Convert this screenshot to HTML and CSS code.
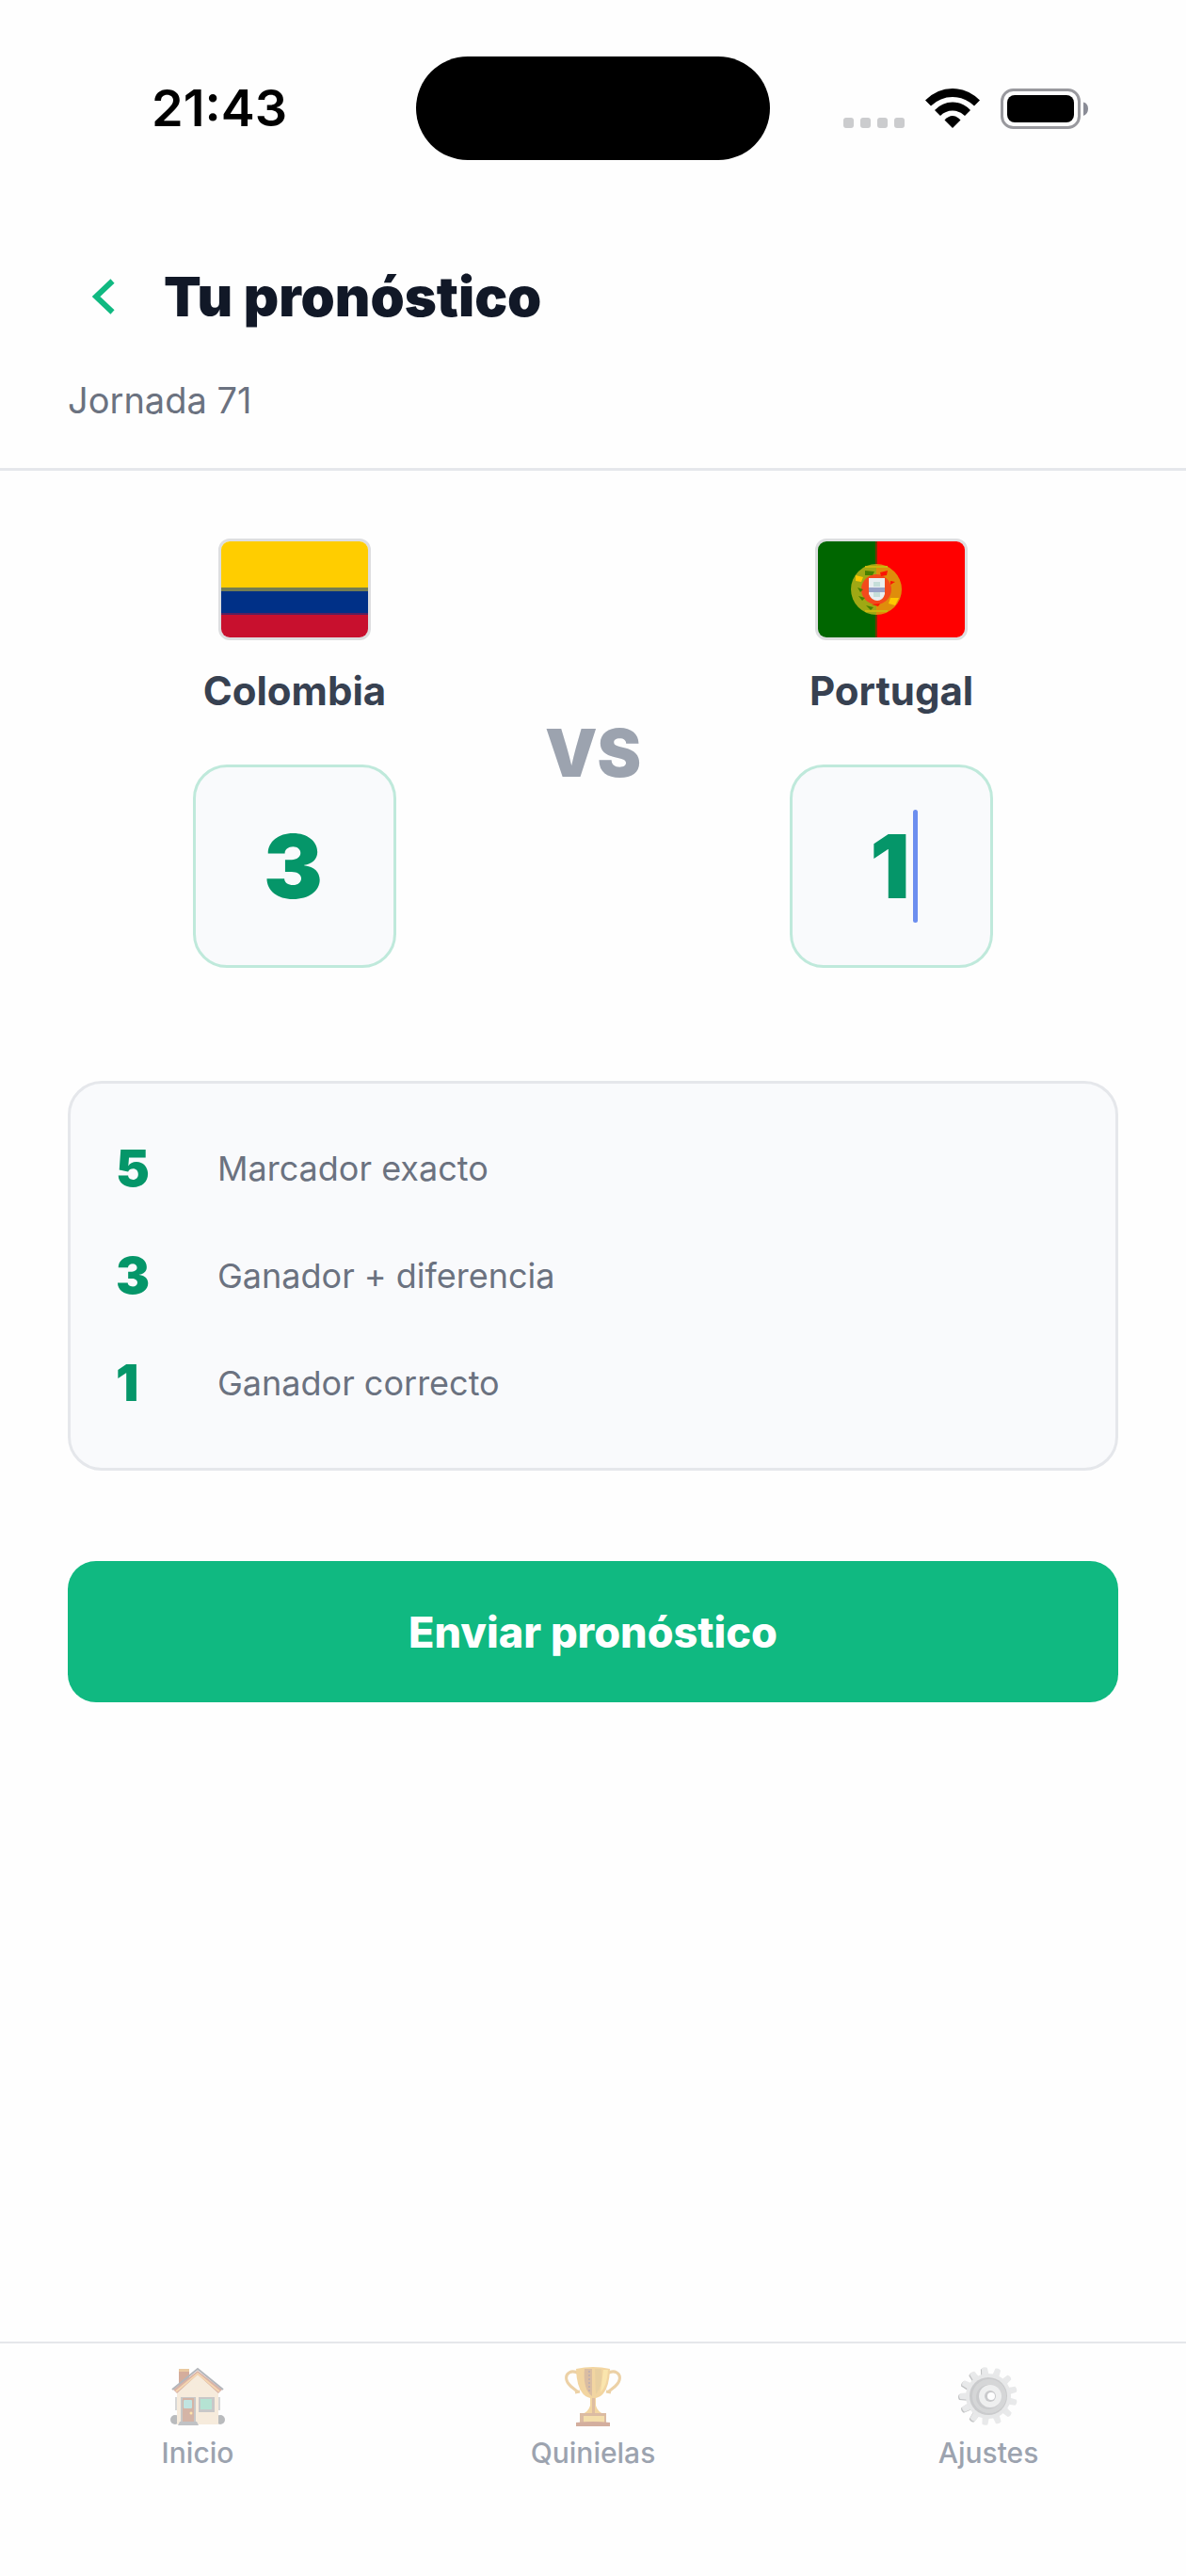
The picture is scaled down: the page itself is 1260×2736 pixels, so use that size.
FILE: index.html
```html
<!DOCTYPE html>
<html lang="es">
<head>
<meta charset="utf-8">
<meta name="viewport" content="width=device-width, initial-scale=1">
<title>Tu pronóstico</title>
<link rel="stylesheet" href="styles.css">
</head>
<body>
<div class="screen">
  <div class="status">
    <time class="status-time">21:43</time>
    <div class="island"></div>
    <div class="status-icons">
      <svg class="signal" viewBox="0 0 65 43" aria-hidden="true">
        <g fill="#cbccce"><rect y="31" width="11" height="11" rx="3"/><rect x="18" y="31" width="11" height="11" rx="3"/><rect x="36" y="31" width="11" height="11" rx="3"/><rect x="54" y="31" width="11" height="11" rx="3"/></g>
      </svg>
      <svg class="wifi" viewBox="0 0 58 43" aria-hidden="true">
        <path d="M0 12.500Q12.500 0 29 0T58 12.500L52 18.500Q42 9 29 9T6 18.500Z"/>
        <path d="M10 23Q18 14.500 29 14.500T48 23L42 29Q36.500 23.500 29 23.500T16 29Z"/>
        <path d="M20.500 33.500Q24.500 29 29 29T37.500 33.500L29 42Z"/>
      </svg>
      <svg class="battery" viewBox="0 0 94 43" aria-hidden="true">
        <rect x="1.500" y="1.500" width="82" height="40" rx="12" fill="none" stroke="#99999e" stroke-width="3"/>
        <rect x="7" y="7" width="71" height="29" rx="8"/>
        <path d="M88 14.500Q93 16 93 21.500T88 29Z" fill="#8a8c96"/>
      </svg>
    </div>
  </div>

  <header class="header">
    <div class="title-row">
      <button class="back" type="button" aria-label="Volver">
        <svg viewBox="0 0 24 38" aria-hidden="true"><path d="M21.500 2.500L4 19L21.500 35.500" fill="none" stroke="#10b981" stroke-width="6"/></svg>
      </button>
      <h1 class="title">Tu pronóstico</h1>
    </div>
    <p class="round">Jornada 71</p>
  </header>

  <main class="content">
    <form class="form">
      <div class="match">
        <div class="team">
          <svg class="flag" viewBox="0 0 156 102" preserveAspectRatio="none" aria-hidden="true">
            <path fill="#ffcd00" d="M0 0h156v51H0z"/><path fill="#003087" d="M0 51h156v26H0z"/><path fill="#c8102e" d="M0 77h156v25H0z"/>
            <path fill="#747d52" d="M0 49h156v4H0z"/><path fill="#56205f" d="M0 76h156v2H0z"/>
          </svg>
          <label class="team-name" for="home">Colombia</label>
          <div class="score"><input id="home" class="score-input" type="text" inputmode="numeric" maxlength="2" value="3"></div>
        </div>
        <span class="versus">VS</span>
        <div class="team">
          <svg class="flag" viewBox="0 0 156 102" preserveAspectRatio="none" aria-hidden="true">
            <path fill="#060" d="M0 0h62v102H0z"/><path fill="red" d="M62 0h94v102H62z"/><path fill="#7a3300" d="M61 0h2v102h-2z"/>
            <path fill="#9fa814" d="M62 24a27 27 0 0 0 0 54z"/><path fill="#df8d0b" d="M62 24a27 27 0 0 1 0 54z"/>
            <circle cx="62" cy="51" r="16" fill="#f34a1c"/>
            <path d="M50 27h24M50 74h24" fill="none" stroke="#c8b70e" stroke-width="2"/>
            <path d="M50 31l10 1-2 4h-8zM42 49l6 2-3 3zM43 58l7 2-3 3zM51 68l8 2-3 3z" fill="#478000"/>
            <path d="M77 60l9 0-4 8-7-2zM40 36l8 2-2 5-6-1z" fill="#ffc800"/>
            <path d="M66 33l8-2-1 5-6 1zM77 42l5 1-5 3zM57 67l9-1-2 3z" fill="#fa1505"/>
            <path d="M54 39h17v17q-2 7-8 7t-9-7z" fill="#e9eef0"/><path d="M54 49h17v5H54z" fill="#98a3c8"/><path d="M59 43h7v5h-7zM59 54h7v5h-7z" fill="#c5ded9"/>
          </svg>
          <label class="team-name" for="away">Portugal</label>
          <div class="score"><input id="away" class="score-input" type="text" inputmode="numeric" maxlength="2" value="1"><span class="caret"></span></div>
        </div>
      </div>

      <dl class="rules">
        <div class="rule"><dt class="points">5</dt><dd class="rule-text">Marcador exacto</dd></div>
        <div class="rule"><dt class="points">3</dt><dd class="rule-text">Ganador + diferencia</dd></div>
        <div class="rule"><dt class="points">1</dt><dd class="rule-text">Ganador correcto</dd></div>
      </dl>

      <button class="submit" type="button">Enviar pronóstico</button>
    </form>
  </main>

  <nav class="tabs">
    <a class="tab" href="#inicio">
      <svg class="tab-icon" viewBox="0 0 64 64" aria-hidden="true">
        <circle cx="8" cy="57" r="5" fill="#676b70"/><circle cx="56" cy="57" r="5" fill="#676b70"/>
        <path d="M8 33h3v14H8zM53 33h3v14h-3z" fill="#aaa"/>
        <path d="M12 4h11v20H12z" fill="#a24d27"/><path d="M12 3h11v3H12z" fill="#d18a32"/>
        <path d="M10 27L32 7l22 20v35H10z" fill="#edd6b4"/>
        <path d="M32 5L6 25l4 4 22-20 22 20 4-4z" fill="#ad593d"/>
        <path d="M9 27L32 8l23 19" fill="none" stroke="#eba652" stroke-width="2"/>
        <path d="M5 25L32 3l27 22" fill="none" stroke="#5c616b" stroke-width="2"/>
        <path d="M14 33h16v29H14z" fill="#888"/><path d="M16 34h12v26H16z" fill="#a35b3c"/><rect x="17" y="36" width="9" height="9" rx="1" fill="#79c5bf"/><circle cx="25" cy="50" r="1.500" fill="#ffc845"/>
        <path d="M33 33h17v16H33z" fill="#878787"/><path d="M35 35h12v11H35z" fill="#5dc4a0"/>
        <path d="M13 59h18l2 4H11z" fill="#777b82"/>
      </svg>
      <span>Inicio</span>
    </a>
    <a class="tab" href="#quinielas">
      <svg class="tab-icon" viewBox="0 0 64 64" aria-hidden="true">
        <path d="M17 8C9 3 2 8 4 15c2 7 8 8 12 13M47 8c8-5 15 0 13 7-2 7-8 8-12 13M13 28l5-1M46 27l5 1" fill="none" stroke="#d79b3c" stroke-width="3"/>
        <path d="M14 3q18-4 36 0-1 28-15 31v8q2 7 9 9H20q7-2 9-9v-8Q15 31 14 3z" fill="#e5a531"/>
        <path d="M23 3h8v29Q21 25 23 3z" fill="#b06f33"/><path d="M34 3h7q2 18-6 27z" fill="#cf982f"/><path d="M43 4h5q-1 17-8 24z" fill="#f7c74d"/>
        <path d="M28 5v22" stroke="#684d53" stroke-width="1.500" stroke-dasharray="2 2"/>
        <path d="M31 34h3v16h-3z" fill="#b87032"/><path d="M18 50h28v10H18z" fill="#b26c36"/><path d="M22 53h22v7H22z" fill="#eab947"/><path d="M14 60q18-2 36 0v4H14z" fill="#a04f2c"/>
      </svg>
      <span>Quinielas</span>
    </a>
    <a class="tab" href="#ajustes">
      <svg class="tab-icon" viewBox="0 0 64 64" aria-hidden="true">
        <defs><path id="tooth" d="M28 14L29 2Q32 0 35 2L36 14z"/></defs>
        <g fill="#777a7d" transform="translate(-1 1)"><use href="#tooth" transform="rotate(-8 32 32)"/><use href="#tooth" transform="rotate(-35 32 32)"/><use href="#tooth" transform="rotate(-62 32 32)"/><use href="#tooth" transform="rotate(-90 32 32)"/><use href="#tooth" transform="rotate(-118 32 32)"/><use href="#tooth" transform="rotate(-146 32 32)"/></g>
        <g fill="#cfd0d2"><use href="#tooth" transform="rotate(-8 32 32)"/><use href="#tooth" transform="rotate(20 32 32)"/><use href="#tooth" transform="rotate(48 32 32)"/><use href="#tooth" transform="rotate(76 32 32)"/><use href="#tooth" transform="rotate(103 32 32)"/><use href="#tooth" transform="rotate(131 32 32)"/><use href="#tooth" transform="rotate(159 32 32)"/><use href="#tooth" transform="rotate(187 32 32)"/><use href="#tooth" transform="rotate(214 32 32)"/><use href="#tooth" transform="rotate(242 32 32)"/><use href="#tooth" transform="rotate(270 32 32)"/><use href="#tooth" transform="rotate(298 32 32)"/><use href="#tooth" transform="rotate(325 32 32)"/></g>
        <circle cx="32" cy="32" r="24" fill="#cdced0"/><circle cx="32" cy="32" r="20" fill="#8d8f92"/><circle cx="33" cy="32" r="18" fill="#a5a7aa"/><circle cx="32" cy="33" r="13" fill="#8d8f92"/><circle cx="34" cy="32" r="12" fill="#dcdddf"/><circle cx="34" cy="32" r="6" fill="#8a8c90"/><circle cx="35" cy="32" r="4" fill="#fff"/>
      </svg>
      <span>Ajustes</span>
    </a>
  </nav>
</div>
</body>
</html>
```
FILE: styles.css
```css
* {
  box-sizing: border-box;
}

body {
  margin: 0;
  background: #fefefe;
  font-family: Inter, "Liberation Sans", sans-serif;
  color: #111827;
}

.screen {
  display: flex;
  flex-direction: column;
  min-height: 100vh;
}

.status {
  display: grid;
  grid-template-columns: 1fr 376px 1fr;
  align-items: center;
  padding: 60px 0 0;
}

.status-time {
  justify-self: center;
  padding-left: 24px;
  font-size: 54px;
  font-weight: 600;
  line-height: 66px;
  color: #000;
}

.island {
  height: 110px;
  border-radius: 55px;
  background: #000;
}

.status-icons {
  display: flex;
  justify-content: flex-end;
  gap: 22px;
  padding-right: 103px;
}

.status-icons svg {
  height: 43px;
}

.signal {
  width: 65px;
}

.wifi {
  width: 58px;
}

.battery {
  width: 94px;
}

.header {
  padding: 107px 72px 48px;
  border-bottom: 3px solid #e5e7eb;
}

.title-row {
  display: flex;
  align-items: center;
  gap: 26px;
}

.back {
  display: flex;
  align-items: center;
  justify-content: center;
  width: 76px;
  height: 76px;
  padding: 0;
  border: 0;
  background: none;
}

.back svg {
  width: 24px;
  height: 38px;
}

.title {
  margin: 0;
  font-size: 58px;
  font-weight: 900;
  line-height: 76px;
}

.round {
  margin: 48px 0 0;
  font-size: 38px;
  line-height: 48px;
  color: #6b7280;
}

.content {
  flex: 1;
  padding: 72px;
}

.match {
  display: flex;
  align-items: center;
}

.team {
  display: flex;
  flex: 1 1 0;
  flex-direction: column;
  align-items: center;
}

.flag {
  width: 162px;
  height: 108px;
  border: 3px solid #dddee0;
  border-radius: 12px;
}

.team-name {
  margin: 27px 0 51px;
  font-size: 42px;
  font-weight: 700;
  line-height: 54px;
  color: #374151;
}

.score {
  position: relative;
  width: 216px;
  height: 216px;
}

.score-input {
  width: 100%;
  height: 100%;
  padding: 0 3px 0 0;
  border: 3px solid #bfe9db;
  border-radius: 36px;
  outline: 0;
  background: #f9fafc;
  font: inherit;
  font-size: 94px;
  font-weight: 900;
  text-align: center;
  color: #059669;
}

.caret {
  position: absolute;
  top: 48px;
  left: 131px;
  width: 5px;
  height: 120px;
  border-radius: 3px;
  background: #6c8eef;
}

.versus {
  padding: 0 25px;
  font-size: 70px;
  font-weight: 900;
  line-height: 84px;
  color: #9ca3af;
}

.rules {
  display: grid;
  gap: 48px;
  margin: 120px 0 96px;
  padding: 57px 48px;
  border: 3px solid #e5e7eb;
  border-radius: 36px;
  background: #f9fafc;
}

.rule {
  display: grid;
  grid-template-columns: 60px 1fr;
  gap: 48px;
  align-items: center;
}

.points {
  font-size: 54px;
  font-weight: 900;
  line-height: 66px;
  color: #059669;
}

.rule-text {
  margin: 0;
  font-size: 36px;
  line-height: 48px;
  color: #6b7280;
}

.submit {
  width: 100%;
  height: 150px;
  border: 0;
  border-radius: 30px;
  background: #10b981;
  font: inherit;
  font-size: 45px;
  font-weight: 800;
  color: #fff;
}

.tabs {
  display: grid;
  grid-template-columns: repeat(3, 1fr);
  padding: 24px 0 113px;
  border-top: 2px solid #e5e7eb;
}

.tab {
  display: flex;
  flex-direction: column;
  align-items: center;
  gap: 10px;
  font-size: 30px;
  font-weight: 500;
  line-height: 36px;
  text-decoration: none;
  color: #9ca3af;
}

.tab-icon {
  width: 64px;
  height: 64px;
  opacity: 0.45;
}
```
